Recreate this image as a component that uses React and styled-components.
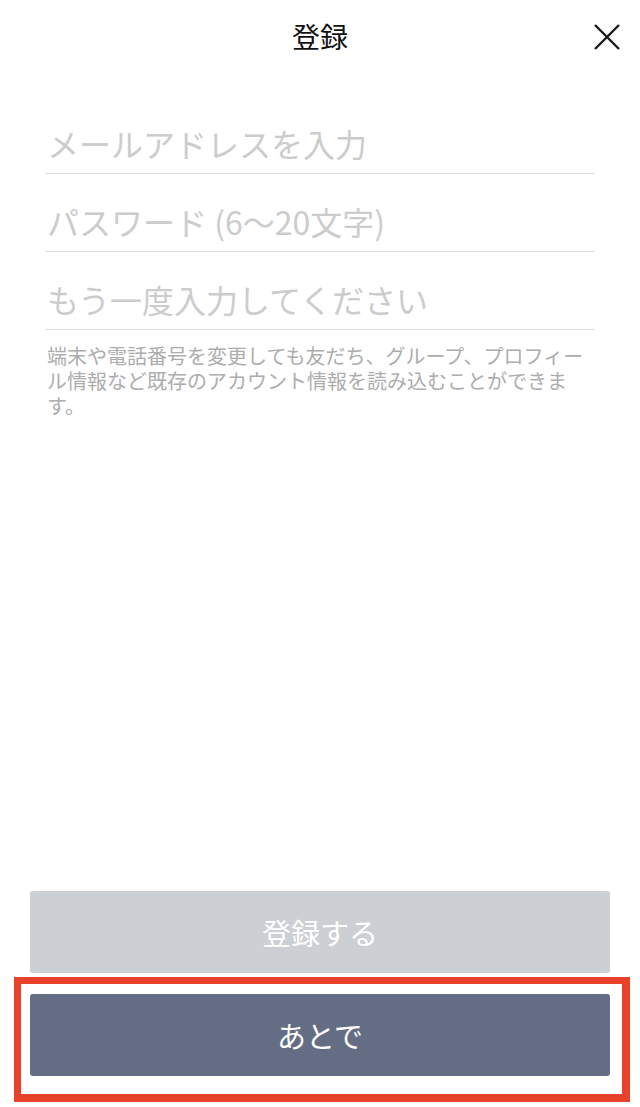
import styled, { createGlobalStyle } from 'styled-components';

const GlobalStyle = createGlobalStyle`
  html, body {
    margin: 0;
    padding: 0;
    background: #fff;
  }
  body {
    font-family: "Noto Sans CJK JP", "Noto Sans", sans-serif;
  }
`;

const Page = styled.div`
  min-height: 1107px;
  display: flex;
  flex-direction: column;
  box-sizing: border-box;
  padding-bottom: 31px;
`;

const Header = styled.header`
  height: 72px;
  display: flex;
  align-items: center;
  justify-content: center;
  position: relative;
`;

const Title = styled.h1`
  margin: 0;
  font-size: 28px;
  font-weight: 400;
  color: #111;
  line-height: 1;
`;

const CloseButton = styled.button`
  position: absolute;
  right: 18px;
  top: 22px;
  width: 30px;
  height: 30px;
  padding: 0;
  border: 0;
  background: none;
  display: flex;
  align-items: center;
  justify-content: center;
`;

const Form = styled.div`
  margin: 24px 45px 0;
`;

const Field = styled.div`
  height: 77px;
  display: flex;
  align-items: flex-end;
  box-sizing: content-box;
  border-bottom: 1px solid #dedede;
`;

const Placeholder = styled.span`
  font-size: 32px;
  line-height: 32px;
  color: #cccccc;
  padding: 0 0 14px 2px;
  white-space: nowrap;
`;

const Note = styled.p`
  margin: 13px 0 0;
  padding-left: 2px;
  font-size: 20px;
  line-height: 25px;
  color: #adadad;
`;

const Spacer = styled.div`
  flex: 1;
`;

const Actions = styled.div`
  display: flex;
  flex-direction: column;
  gap: 21px;
  margin: 0 30px;
`;

const Slot = styled.div`
  position: relative;
`;

const Button = styled.button`
  width: 100%;
  height: 82px;
  border: 0;
  border-radius: 3px;
  background: ${p => (p.$variant === 'dark' ? '#656d84' : '#cccfd3')};
  color: #fff;
  font-family: inherit;
  font-size: 29px;
  display: flex;
  align-items: center;
  justify-content: center;
`;

const Highlight = styled.div`
  position: absolute;
  top: -17px;
  left: -16px;
  right: -20px;
  bottom: -26px;
  border: 7px solid #e8432a;
  border-right-width: 8px;
  border-bottom-width: 8px;
  pointer-events: none;
`;

const fields = [
  'メールアドレスを入力',
  'パスワード (6〜20文字)',
  'もう一度入力してください',
];

export default function App() {
  return (
    <Page>
      <GlobalStyle />
      <Header>
        <Title>登録</Title>
        <CloseButton aria-label="close">
          <svg width="28" height="28" viewBox="0 0 28 28">
            <path d="M2 2 L26 26 M26 2 L2 26" stroke="#1a1a1a" strokeWidth="2.4" fill="none" />
          </svg>
        </CloseButton>
      </Header>

      <Form>
        {fields.map(f => (
          <Field key={f}>
            <Placeholder>{f}</Placeholder>
          </Field>
        ))}
        <Note>
          端末や電話番号を変更しても友だち、グループ、プロフィール情報など既存のアカウント情報を読み込むことができます。
        </Note>
      </Form>

      <Spacer />

      <Actions>
        <Slot>
          <Button>登録する</Button>
        </Slot>
        <Slot>
          <Button $variant="dark">あとで</Button>
          <Highlight />
        </Slot>
      </Actions>
    </Page>
  );
}
